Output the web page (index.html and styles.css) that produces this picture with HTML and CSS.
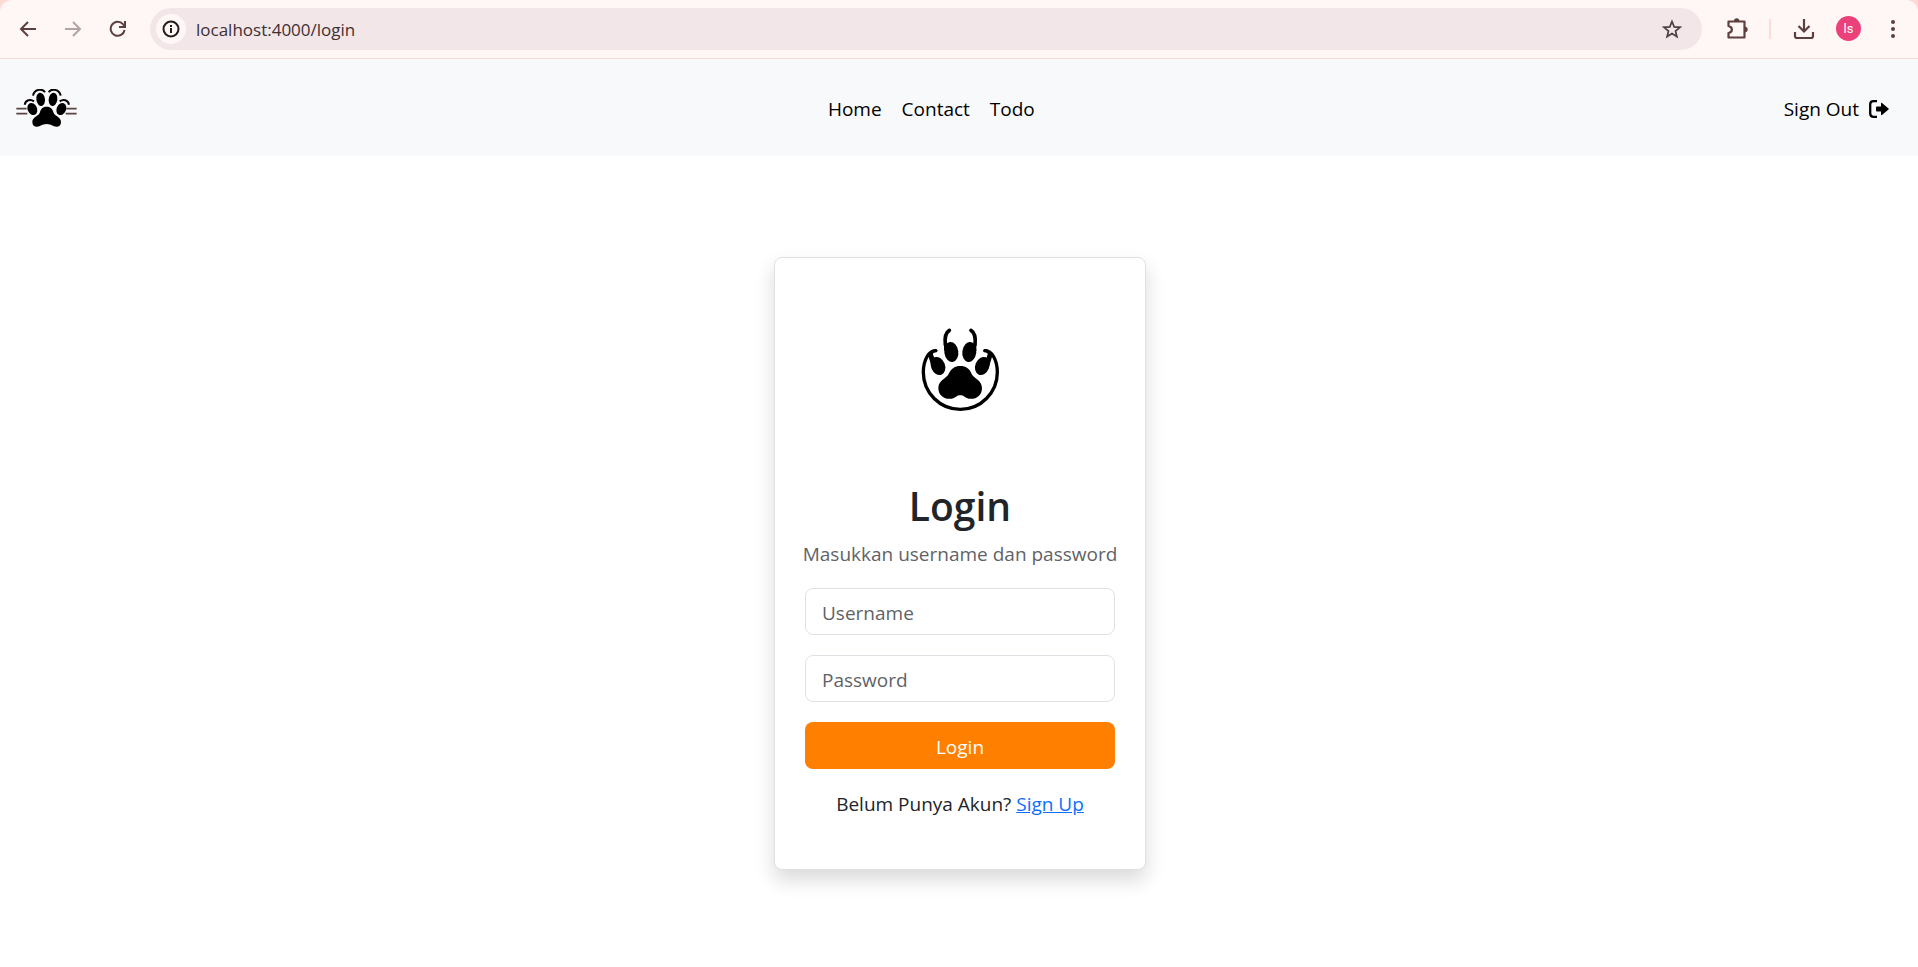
FILE: index.html
```html
<!DOCTYPE html>
<html lang="id">
<head>
<meta charset="utf-8">
<meta name="viewport" content="width=device-width, initial-scale=1">
<title>Login</title>
<link rel="stylesheet" href="styles.css">
</head>
<body>
<div class="frame">
<div class="toolbar">
  <button class="tool" type="button" aria-label="Back"><svg width="18" height="18" viewBox="0 0 18 18" fill="none" stroke="#5d403d" stroke-width="2"><path d="M17 9H3M9 2 2 9l7 7"/></svg></button>
  <button class="tool" type="button" aria-label="Forward"><svg width="18" height="18" viewBox="0 0 18 18" fill="none" stroke="#b3a3a2" stroke-width="2"><path d="M1 9h14M9 2l7 7-7 7"/></svg></button>
  <button class="tool" type="button" aria-label="Reload"><svg width="18" height="18" viewBox="0 0 18 18" fill="none" stroke="#5d403d" stroke-width="2"><path d="M15.600 10A7 7 0 1 1 14 4.200L15.800 6M16 1v6h-6"/></svg></button>
  <div class="address">
    <button class="info" type="button" aria-label="Site information"><svg width="18" height="18" viewBox="0 0 18 18" fill="none" stroke="#241b1c" stroke-width="2"><circle cx="9" cy="9" r="7.500"/><path d="M9 8v5M9 5v2"/></svg></button>
    <input class="url" type="text" aria-label="Address" value="localhost:4000/login">
    <button class="star" type="button" aria-label="Bookmark"><svg width="20" height="20" viewBox="0 0 20 20" fill="none" stroke="#4b3f40" stroke-width="1.700"><path d="m10 2.500 2.200 5.400 5.700.4-4.400 3.700 1.400 5.700L10 14.600l-4.900 3.100L6.500 12 2.100 8.300l5.700-.4z"/></svg></button>
  </div>
  <div class="extras">
    <button class="tool" type="button" aria-label="Extensions"><svg width="22" height="22" viewBox="0 0 22 22"><path d="M2.500 3.500h16v16h-16v-4.500c4.500-1 4.500-6 0-7z" fill="none" stroke="#5d403d" stroke-width="2.200" stroke-linejoin="round"/><path d="M8 3a2.700 2.700 0 0 1 5.400 0zM19 8.800a2.700 2.700 0 0 1 0 5.400z" fill="#5d403d"/></svg></button>
    <span class="rule"></span>
    <button class="tool" type="button" aria-label="Downloads"><svg width="22" height="22" viewBox="0 0 22 22" fill="none" stroke="#5d403d" stroke-width="2.200"><path d="M11 1v12M5.500 8l5.500 5.500L16.500 8M2 14v4q0 2 2 2h14q2 0 2-2v-4"/></svg></button>
    <button class="avatar" type="button">ls</button>
    <button class="dots" type="button" aria-label="Menu"><svg width="6" height="20" viewBox="0 0 6 20" fill="#5d403d"><circle cx="3" cy="3" r="2"/><circle cx="3" cy="10" r="2"/><circle cx="3" cy="17" r="2"/></svg></button>
  </div>
</div>
</div>

<header class="navbar">
  <a class="brand" href="#" aria-label="Home page">
    <svg width="64" height="40" viewBox="0 0 192 120">
      <path d="M4 59h31M4 74h33M154 59h31M152 74h33" stroke="#5a4543" stroke-width="5"/>
      <g fill="none" stroke="#0a0504" stroke-width="6"><path d="M54 20c4-20 28-23 36-10M101 10c8-13 32-10 36 10M29 47c3-14 17-18 28-10M134 37c11-8 25-4 28 10"/></g>
      <ellipse cx="77" cy="31" rx="13" ry="20" transform="rotate(-8 77 31)"/>
      <ellipse cx="114" cy="31" rx="13" ry="20" transform="rotate(8 114 31)"/>
      <ellipse cx="52" cy="60" rx="14" ry="19" transform="rotate(-24 52 60)"/>
      <ellipse cx="139" cy="60" rx="14" ry="19" transform="rotate(24 139 60)"/>
      <path d="M95 53c13 0 18 8 21 19 3 9 22 12 22 27 0 13-11 17-21 13-9-5-16-7-22-7s-13 2-22 7c-10 4-21 0-21-13 0-15 19-18 22-27 3-11 8-19 21-19z"/>
    </svg>
  </a>
  <nav class="links">
    <a href="#">Home</a>
    <a href="#">Contact</a>
    <a href="#">Todo</a>
  </nav>
  <a class="signout" href="#">Sign Out
    <svg width="20" height="18" viewBox="0 0 20 18"><path d="M8 1.200H4.500Q1.200 1.200 1.200 4.500v9q0 3.300 3.300 3.300H8" fill="none" stroke="#000" stroke-width="2.300"/><path d="M7 7.500q0-1 1-1h4V3.800q0-1.600 1.300-.6l6.200 5.200q.7.600 0 1.200l-6.200 5.200q-1.300 1-1.300-.6v-2.700H8q-1 0-1-1z"/></svg>
  </a>
</header>

<main class="page">
  <form class="card">
    <svg class="logo" width="192" height="192" viewBox="0 0 192 192" role="img" aria-label="Logo">
      <g transform="translate(36 22) scale(.3333)">
        <g fill="none" stroke="#000" stroke-linecap="round">
          <path d="M107 122C88 121 70 148 70 187a111 111 0 0 0 222 0c0-39-18-66-37-65" stroke-width="10"/>
          <path d="M108 122q-12-1-15 13l7 14M254 122q12-1 15 13l-7 14" stroke-width="9"/>
          <path d="M148 61q-16 10-12 43M213 61q16 10 12 43" stroke-width="11"/>
        </g>
        <path d="M84 134l12-10 6 19 14 2-22 22zM278 134l-12-10-6 19-14 2 22 22z"/>
        <path d="M132 92l8 10 12-4-20 26zM229 92l-8 10-12-4 20 26z"/>
        <ellipse cx="154" cy="126" rx="21" ry="30" transform="rotate(-8 154 126)"/>
        <ellipse cx="208" cy="126" rx="21" ry="30" transform="rotate(8 208 126)"/>
        <ellipse cx="114" cy="168" rx="21" ry="28" transform="rotate(-22 114 168)"/>
        <ellipse cx="247" cy="168" rx="21" ry="28" transform="rotate(22 247 168)"/>
        <path d="M181 168c16 0 28 8 33 22 5 15 32 20 32 44 0 27-25 38-46 30-7-3-9-8-19-8s-12 5-19 8c-21 8-47-3-47-30 0-24 27-29 32-44 6-14 18-22 34-22z"/>
      </g>
    </svg>
    <h1 class="title">Login</h1>
    <p class="hint">Masukkan username dan password</p>
    <input class="field" type="text" placeholder="Username" aria-label="Username">
    <input class="field" type="password" placeholder="Password" aria-label="Password">
    <button class="submit" type="submit">Login</button>
    <p class="signup">Belum Punya Akun? <a href="#">Sign Up</a></p>
  </form>
</main>
</body>
</html>
```
FILE: styles.css
```css
* { box-sizing: border-box; }

body {
  margin: 0;
  background: #fff;
  color: #212529;
  font: 19px/30px "Open Sans", "Noto Sans", sans-serif;
}

button, input { font: inherit; }

button {
  border: 0;
  padding: 0;
  background: none;
}

svg { display: block; }

.frame { background: #ffd9d4; }

.toolbar {
  display: flex;
  align-items: center;
  height: 59px;
  padding: 0 10px 1px 5px;
  border-bottom: 1px solid #f7dedb;
  border-radius: 12px 12px 0 0;
  background: #fff7f6;
}

.tool {
  display: grid;
  place-items: center;
  width: 45px;
  height: 42px;
}

.address {
  flex: 1;
  display: flex;
  align-items: center;
  height: 42px;
  margin-left: 10px;
  padding: 0 20px 0 6px;
  border-radius: 21px;
  background: #f2e6e8;
}

.info {
  display: grid;
  place-items: center;
  width: 30px;
  height: 30px;
  border-radius: 50%;
  background: #fff7f6;
}

.url {
  flex: 1;
  min-width: 0;
  padding: 2px 10px 0;
  border: 0;
  outline: 0;
  background: none;
  color: #3d3033;
  font-size: 17px;
}

.extras {
  display: flex;
  align-items: center;
  padding-left: 12px;
}

.rule {
  width: 2px;
  height: 20px;
  margin: 0 10px;
  background: #ffdad6;
}

.avatar {
  width: 25px;
  height: 25px;
  margin-left: 10px;
  border-radius: 50%;
  background: #ec407a;
  color: #fff;
  font: 13px/25px Roboto, sans-serif;
}

.dots {
  display: grid;
  place-items: center;
  width: 30px;
  margin-left: 17px;
}

.navbar {
  display: flex;
  justify-content: space-between;
  align-items: center;
  height: 97px;
  padding: 3px 29px 0 15px;
  background: #f8f9fb;
}

.navbar a {
  color: #000;
  text-decoration: none;
}

.links {
  display: flex;
  gap: 20px;
}

.signout {
  display: flex;
  align-items: center;
  gap: 10px;
}

.page {
  display: flex;
  justify-content: center;
  padding: 101px 20px 98px 22px;
}

.card {
  display: flex;
  flex-direction: column;
  width: 372px;
  padding: 30px;
  border: 1px solid #dee2e6;
  border-radius: 8px;
  background: #fff;
  box-shadow: 0 10px 20px rgba(0, 0, 0, .15);
}

.logo { align-self: center; }

.title {
  margin: 0 0 8px;
  font-size: 39px;
  line-height: 51px;
  font-weight: 600;
  text-align: center;
}

.hint {
  align-self: center;
  margin: 0 0 19px;
  color: #5f6367;
  white-space: nowrap;
}

.field {
  width: 100%;
  height: 47px;
  margin-bottom: 20px;
  padding: 2px 16px 0;
  border: 1px solid #dee2e6;
  border-radius: 8px;
  background: #fff;
}

.field::placeholder {
  color: #5f6367;
  opacity: 1;
}

.submit {
  height: 47px;
  margin-bottom: 20px;
  padding-top: 2px;
  border-radius: 8px;
  background: #ff8000;
  color: #fff;
}

.signup {
  margin: 0 0 20px;
  text-align: center;
}

.signup a { color: #0d6efd; }
```
